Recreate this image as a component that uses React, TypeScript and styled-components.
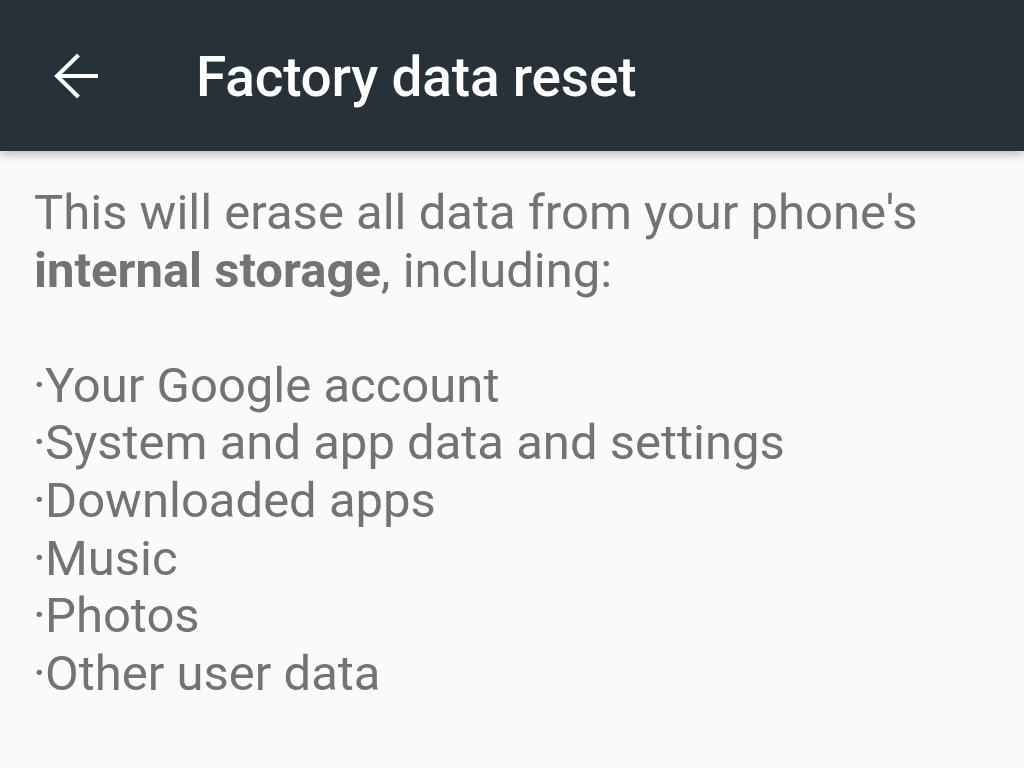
import styled, { createGlobalStyle } from "styled-components";

const GlobalStyle = createGlobalStyle`
  html, body {
    margin: 0;
    padding: 0;
    background: #fafafa;
  }
  body {
    font-family: Roboto, "Noto Sans", sans-serif;
    -webkit-font-smoothing: antialiased;
  }
`;

const items = [
  "Your Google account",
  "System and app data and settings",
  "Downloaded apps",
  "Music",
  "Photos",
  "Other user data",
];

const App = () => {
  return (
    <>
      <GlobalStyle />
      <PageStyled>
        <ToolbarStyled>
          <BackButtonStyled aria-label="Back">
            <svg width="48" height="48" viewBox="0 0 48 48" fill="none">
              <path d="M46 24H6" stroke="#fff" strokeWidth="4" />
              <path d="M26.5 3L5 24l21.5 21" stroke="#fff" strokeWidth="4" strokeLinejoin="miter" />
            </svg>
          </BackButtonStyled>
          <TitleStyled>Factory data reset</TitleStyled>
        </ToolbarStyled>
        <ContentStyled>
          <ParagraphStyled>
            This will erase all data from your phone's
            <br />
            <b>internal storage</b>, including:
          </ParagraphStyled>
          <ListStyled>
            {items.map((item) => (
              <ItemStyled key={item}>
                <DotStyled>·</DotStyled>
                {item}
              </ItemStyled>
            ))}
          </ListStyled>
        </ContentStyled>
      </PageStyled>
    </>
  );
};

export default App;

const PageStyled = styled.div`
  width: 1024px;
  height: 768px;
  overflow: hidden;
  background: #fafafa;
`;

const ToolbarStyled = styled.header`
  position: relative;
  z-index: 1;
  height: 151px;
  background: #263238;
  display: flex;
  align-items: center;
  box-shadow: 0 3px 10px rgba(0, 0, 0, 0.28);
`;

const BackButtonStyled = styled.div`
  width: 48px;
  height: 48px;
  margin-left: 52px;
  display: flex;
`;

const TitleStyled = styled.h1`
  margin: 0 0 0 96px;
  padding-top: 2px;
  color: #fff;
  font-family: Roboto, "Noto Sans", sans-serif;
  font-weight: 500;
  font-size: 55px;
  letter-spacing: -0.2px;
`;

const ContentStyled = styled.main`
  padding: 33px 0 0 34px;
  color: #737373;
  font-size: 49px;
  line-height: 57.6px;
`;

const ParagraphStyled = styled.p`
  margin: 0 0 57.6px 0;

  b {
    font-weight: 700;
  }
`;

const ListStyled = styled.div`
  display: flex;
  flex-direction: column;
`;

const ItemStyled = styled.div`
  display: flex;
  white-space: nowrap;
`;

const DotStyled = styled.span`
  width: 12px;
  margin-left: -1px;
`;
